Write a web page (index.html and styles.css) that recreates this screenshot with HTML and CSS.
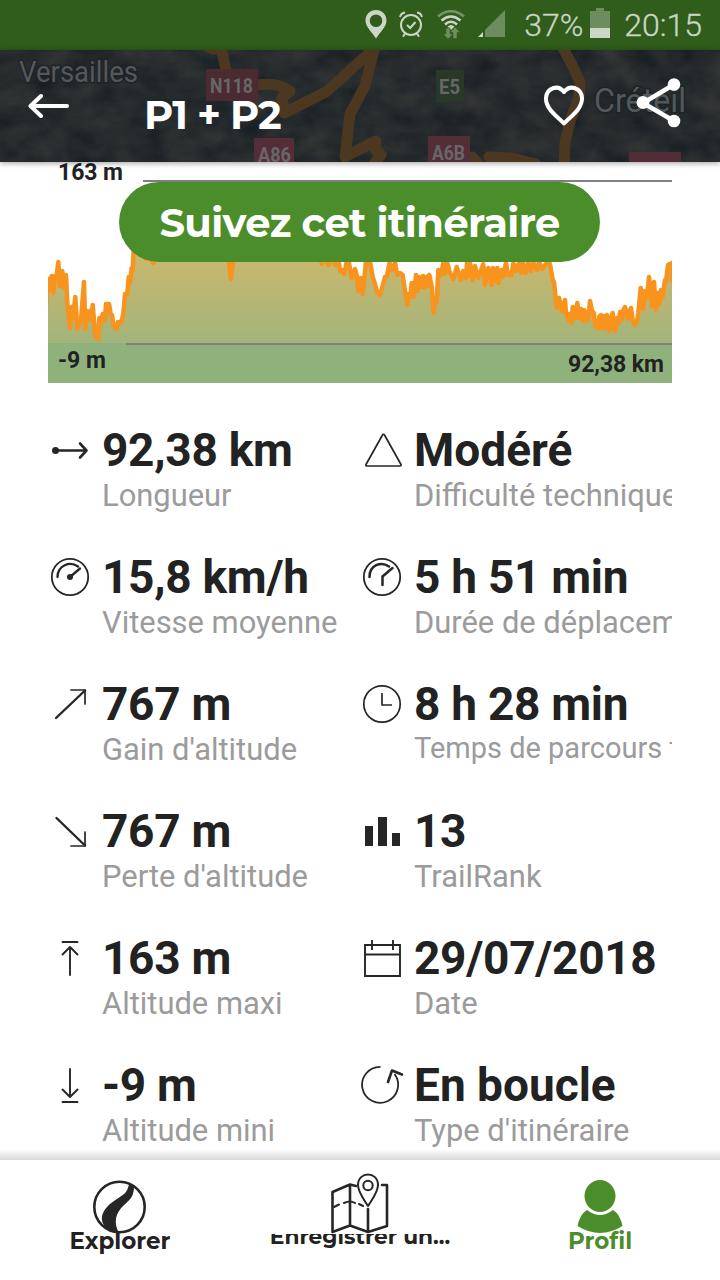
FILE: index.html
```html
<!DOCTYPE html>
<html lang="fr">
<head>
<meta charset="utf-8">
<title>P1 + P2</title>
<link rel="stylesheet" href="styles.css">
</head>
<body>
<div class="app">
  <div class="status">
    <svg class="s-pin" width="22" height="29" viewBox="0 0 22 29"><path fill-rule="evenodd" d="M11 0C5 0 .5 4.600 .5 10.500C.5 17 7 22 11 28.500C15 22 21.500 17 21.500 10.500C21.500 4.600 17 0 11 0ZM11 4.500a6.300 6.300 0 1 1 0 12.600a6.300 6.300 0 0 1 0-12.600Z"/></svg>
    <svg class="s-alarm" width="24" height="27" viewBox="0 0 24 27" fill="none" stroke="currentColor" stroke-width="2"><circle cx="12" cy="14" r="10"/><path d="M8 14l3.200 3 5.300-6M1 6Q2 2 6 1.500M23 6Q22 2 18 1.500M6 22.500l-2 3.200M18 22.500l2 3.200"/></svg>
    <svg class="s-wifi" width="28" height="29" viewBox="0 0 28 29"><g fill="none" stroke="currentColor" stroke-width="2.600"><path opacity=".45" d="M1 6.500Q14-4 27 6.500"/><path d="M4.500 10.500Q14 2.500 23.500 10.500M8 14.500Q14 9 20 14.500"/></g><path d="M10.500 16.500Q14 13.500 17.500 16.500L14 20Z"/><path fill="#6f8f60" stroke="#305d1b" stroke-width=".6" d="M9 18h4v6h3l-5 5-5-5h3zM16 28.500v-6h-3l5-5.500 5 5.500h-3v6z"/></svg>
    <svg class="s-signal" width="27" height="27" viewBox="0 0 27 27"><path opacity=".4" d="M27 0V27H7V20Z"/><path d="M5 22v5H0z"/></svg>
    <span class="s-text">37%</span>
    <svg class="s-battery" width="20" height="30" viewBox="0 0 20 30"><path opacity=".4" d="M6 0h8v3h6v17H0V3h6z"/><path d="M0 20h20v10H0z"/></svg>
    <span class="s-text">20:15</span>
  </div>

  <header class="header">
    <svg class="map" width="720" height="112" viewBox="0 50 720 112">
      <defs>
        <filter id="terrain" x="0" y="0" width="100%" height="100%" color-interpolation-filters="sRGB"><feTurbulence type="fractalNoise" baseFrequency=".03 .045" numOctaves="5" seed="8"/><feColorMatrix values=".14 .06 0 0 .048  .11 .04 0 0 .092  .08 .04 0 0 .115  0 0 0 0 1"/></filter>
      </defs>
      <rect y="50" width="720" height="112" filter="url(#terrain)"/>
      <g fill="none" stroke="#4c3720" stroke-width="11" stroke-linejoin="round" stroke-linecap="round">
        <path d="M207 46l6 3 8-1 7 30M258 85q20-3 32 6l-8 7 2 15 42-21 50-45M375 46l-10 40-15 28-5 43M346 156l30-15-1 8 6 6-7 9"/>
        <path d="M563 48l9 17 8 17-1 16-8 20-6 24-1 24M489 157l23 1 24 6M472 157l8 9"/>
      </g>
      <rect x="206" y="69" width="52" height="32" fill="#4c2a31"/>
      <rect x="254" y="138" width="40" height="26" fill="#542d38"/>
      <rect x="436" y="70" width="28" height="32" fill="#283829"/>
      <rect x="428" y="136" width="42" height="28" fill="#532e36"/>
      <rect x="629" y="152" width="52" height="12" fill="#512e37"/>
      <g class="road">
        <text x="210" y="93" textLength="43" lengthAdjust="spacingAndGlyphs">N118</text>
        <text x="258" y="162" textLength="33" lengthAdjust="spacingAndGlyphs">A86</text>
        <text x="439" y="94" textLength="21" lengthAdjust="spacingAndGlyphs">E5</text>
        <text x="432" y="160" textLength="33" lengthAdjust="spacingAndGlyphs">A6B</text>
      </g>
      <g class="place">
        <text x="19" y="82" font-size="30" textLength="119" lengthAdjust="spacingAndGlyphs">Versailles</text>
        <text x="594" y="112" font-size="34" textLength="92" lengthAdjust="spacingAndGlyphs">Créteil</text>
      </g>
    </svg>
    <svg class="back" width="42" height="26" viewBox="0 0 42 26" fill="none" stroke="#fff" stroke-width="4" stroke-linecap="round" stroke-linejoin="round"><path d="M39 13H3M13 3L2.500 13 13 23"/></svg>
    <h1 class="title">P1 + P2</h1>
    <svg class="heart" width="42" height="42" viewBox="0 0 42 42" fill="none" stroke="#fff" stroke-width="4" stroke-linejoin="round"><path d="M21 38.500C15 32 2.500 24 3 13C3.500 3 15-1 21 7C27-1 38.500 3 39 13C39.500 24 27 32 21 38.500Z"/></svg>
    <svg class="share" width="46" height="50" viewBox="0 0 46 50"><path d="M38 6.500L7 25l31 18" fill="none" stroke="#fff" stroke-width="4.500"/><g fill="#fff"><circle cx="38" cy="6.500" r="6.300"/><circle cx="7" cy="24.500" r="6.500"/><circle cx="38" cy="43" r="6.300"/></g></svg>
  </header>

  <main class="content">
    <section class="profile">
      <svg width="624" height="221" viewBox="48 162 624 221">
        <defs><linearGradient id="ground" gradientUnits="userSpaceOnUse" x1="0" y1="250" x2="0" y2="344"><stop offset="0" stop-color="#ccb86d"/><stop offset="1" stop-color="#a2b47b"/></linearGradient></defs>
        <path fill="url(#ground)" stroke="#f8941d" stroke-width="4.500" stroke-linejoin="round" d="M43 350L47 293L49 279 50 290 51.700 276 53.300 293 55 276 56.500 277 58.300 262 60 286 62.300 271 64 288 66 275 67.300 303 70 328 71.700 307 73 318 75.300 297 77.300 329 81 320 84 282 85.300 329 86.500 311 88.300 319 90 311 91 320 92.700 305 95.300 336 98.300 339 99.300 318 101 324 102.700 314 105 320 106 304 107.500 311 109 304 110.700 314 112 315 113.500 325 116.700 329 118 322 121 323 123.300 314 125 294 127.300 294 128.700 277 130 283 131.700 268 132.700 270 133.700 250 140 240 146 259 149 255 153.300 263 158 240 228 240 229 262 231 279 233 262 234 240 318 240 321.700 264 325 256 328.500 265 331 255 335 265 338 256 340 271 342 270 344.300 274 347 260 349 263 351.700 278 353.500 276 355 269 357 276 358.300 291 361 278 362.700 294 366 262 370 262 372.700 277 375 284 377.300 293 380 295 382 288 385 277 387 276 389.500 263 391.700 270 395 263 397.300 275 400 273 402.700 275 405 291 407.300 305 409 294 410.500 296 411.700 283 413.500 297 415 285 416 275 417.500 291 419.300 277 421.700 287 423 276 424 288 425.500 277 427 286 428.500 276 429.300 275 431.700 287 433.700 313 435 302 436.700 302 438.300 270 441 275 443.300 263 445 274 447.300 263 450 273 453.300 279 456.700 267 460.700 280 463 271 466 278 467 263 469.500 276 470 263 472.700 280 475 266 478.300 278 483.300 264 485 285 488.300 268 491.700 285 493 268 496 281 497.300 268 498.500 283 501.700 270 503 277 506 263 508 275 511.700 275 513.300 263 516 271 519 263 521 273 523 263 525.700 273 528 263 531 271 533 262 537 270 539 262 542 269 546.700 263 550 264 552.700 280 554 282 556.700 308 559 298 562.300 311 565 300 566 313 568.300 320 569.500 314 571.700 323 572.700 307 575 318 577.300 303 579 318 581 309 583 321 584 310 585.500 321 587 312 588.300 320 590 301 592 311 594 313 595 326 596.500 321 598 329 599.500 316 601 315 602.500 328 604 316 605.500 328 607 315 609.300 331 611 318 612.700 313 614 328 615.300 331 617 318 619 323 620 312 622 319 623 311 625 307 627.700 319 630 310 631 308 633 322 635 325 637 321 638.300 313 640.700 288 642 300 643.300 309 645 291 647 297 649 277 650 286 652 306 653 292 654 282 656 310 658 293 659.500 304 661 290 662.500 297 665 280 666 282 668 265 672 263V280H676V350"/>
        <rect x="48" y="343" width="624" height="40" fill="#8fb27d"/>
        <path stroke="#808080" stroke-width="2" d="M143 181H672M126 344H672"/>
        <g class="axis">
          <text x="58" y="180" textLength="65">163 m</text>
          <text x="58" y="368" textLength="48">-9 m</text>
          <text x="568" y="372" textLength="96">92,38 km</text>
        </g>
      </svg>
      <button class="follow">Suivez cet itinéraire</button>
    </section>

    <section class="stats">
      <div class="stat">
        <svg class="icon" width="44" height="44" viewBox="0 0 44 44"><circle class="solid" cx="7.500" cy="22.500" r="3.500"/><path d="M8 22.500H38M32 15.500l6.500 7-6.500 7" stroke-width="2.600"/></svg>
        <div><div class="value">92,38 km</div><div class="label">Longueur</div></div>
      </div>
      <div class="stat">
        <svg class="icon" width="44" height="44" viewBox="0 0 44 44"><path d="M22.500 7Q23.500 5.500 24.500 7L41 36.500Q41.500 38 40 38H7Q5 38 6 36.500Z" stroke-width="1.700"/></svg>
        <div><div class="value wide">Modéré</div><div class="label">Difficulté technique</div></div>
      </div>
      <div class="stat">
        <svg class="icon" width="44" height="44" viewBox="0 0 44 44"><circle cx="22" cy="22" r="18.200" stroke-width="1.800"/><path d="M9.500 22C9.500 10 22 6 30 11.500M22 22L32 13.500" stroke-width="2.300"/><circle class="solid" cx="22" cy="22" r="3"/></svg>
        <div><div class="value">15,8 km/h</div><div class="label">Vitesse moyenne</div></div>
      </div>
      <div class="stat">
        <svg class="icon" width="44" height="44" viewBox="0 0 44 44"><circle cx="22" cy="22" r="18.200" stroke-width="1.800"/><path d="M9.500 22C9.500 10 21 6 29 11.500M32.500 13L22.500 21.500V30" stroke-width="2.500"/></svg>
        <div><div class="value">5 h 51 min</div><div class="label">Durée de déplacement</div></div>
      </div>
      <div class="stat">
        <svg class="icon" width="44" height="44" viewBox="0 0 44 44"><path d="M8 36L37 8.500" stroke-width="2.400"/><path d="M23 8H37V22" stroke-width="1.700"/></svg>
        <div><div class="value">767 m</div><div class="label">Gain d'altitude</div></div>
      </div>
      <div class="stat">
        <svg class="icon" width="44" height="44" viewBox="0 0 44 44"><circle cx="22" cy="22" r="18.200" stroke-width="1.700"/><path d="M22 11V23H32" stroke-width="1.700" stroke-linecap="butt"/></svg>
        <div><div class="value">8 h 28 min</div><div class="label small">Temps de parcours total</div></div>
      </div>
      <div class="stat">
        <svg class="icon" width="44" height="44" viewBox="0 0 44 44"><path d="M8.500 9L37 36.500" stroke-width="2.400"/><path d="M23 37H37V23" stroke-width="1.700"/></svg>
        <div><div class="value">767 m</div><div class="label">Perte d'altitude</div></div>
      </div>
      <div class="stat">
        <svg class="icon" width="44" height="44" viewBox="0 0 44 44"><path class="solid" d="M5 17h8v20H5zM18 8h9v29h-9zM32 24h8v13h-8z"/></svg>
        <div><div class="value">13</div><div class="label">TrailRank</div></div>
      </div>
      <div class="stat">
        <svg class="icon" width="44" height="44" viewBox="0 0 44 44"><path d="M14.500 6H29.500M22 39V11M14.500 18.500L22 11l7.500 7.500" stroke-width="1.900"/></svg>
        <div><div class="value">163 m</div><div class="label">Altitude maxi</div></div>
      </div>
      <div class="stat">
        <svg class="icon" width="44" height="44" viewBox="0 0 44 44"><path d="M5 9H40V40H5ZM5 18.500H40M12 4v10M33 4v10" stroke-width="1.900" stroke-linecap="butt" stroke-linejoin="miter"/></svg>
        <div><div class="value">29/07/2018</div><div class="label">Date</div></div>
      </div>
      <div class="stat">
        <svg class="icon" width="44" height="44" viewBox="0 0 44 44"><path d="M14.500 39H29.500M22 6V34M14.500 26.500L22 34l7.500-7.500" stroke-width="1.900"/></svg>
        <div><div class="value">-9 m</div><div class="label">Altitude mini</div></div>
      </div>
      <div class="stat">
        <svg class="icon" width="44" height="44" viewBox="0 0 44 44"><path d="M20.500 3.800A18 18 0 1 0 34.500 11" stroke-width="1.800" stroke-linecap="butt"/><path d="M28 19L32 7.500 42 11.500" stroke-width="2.600"/></svg>
        <div><div class="value wide">En boucle</div><div class="label">Type d'itinéraire</div></div>
      </div>
    </section>
  </main>

  <nav class="tabs">
    <a class="tab">
      <svg width="54" height="54" viewBox="0 0 54 54"><circle cx="26.500" cy="27" r="25.200" fill="none" stroke="#262626" stroke-width="2.600"/><path fill="#262626" d="M36 3C35 14 29 15 21 21C5 32 7 43 15 50L26 53C20 42 23 33 30 26C38 19 41 16 41 6Z"/></svg>
      <span class="tab-name">Explorer</span>
    </a>
    <a class="tab record">
      <svg width="60" height="62" viewBox="0 0 60 62" fill="none" stroke="#262626" stroke-width="2.600" stroke-linejoin="round" stroke-linecap="round"><path d="M26 13L20 11.500 2.500 19V59L20 52.500 38 59 57 53V12L52 12M20 11.500V52.500M38 36V59"/><path d="M4 34L9 31.500M14 30Q20 27 25 30M29 31l4 2" stroke-width="2"/><path d="M38 33C33 25 28 19 28 12C28-2 48-2 48 12C48 19 43 25 38 33Z" stroke-width="2"/><circle cx="38" cy="12.500" r="4.700" stroke-width="2"/></svg>
      <span class="tab-name">Enregistrer un...</span>
    </a>
    <a class="tab active">
      <svg width="46" height="54" viewBox="0 0 46 54" fill="#4c8d2b"><ellipse cx="23" cy="16" rx="15.500" ry="16"/><path d="M10 30Q23 40 36 30Q43 34 45.500 46Q23 60 .5 46Q3 34 10 30Z"/></svg>
      <span class="tab-name">Profil</span>
    </a>
  </nav>
</div>
</body>
</html>
```
FILE: styles.css
```css
* { box-sizing: border-box; }
body { margin: 0; background: #fff; font-family: Roboto, "Noto Sans", sans-serif; color: #222; }
.app { width: 720px; height: 1280px; display: flex; flex-direction: column; overflow: hidden; }
svg { display: block; flex: none; }

.status { height: 50px; flex: none; background: #305d1b; color: #cbd6c6; display: flex; align-items: center; justify-content: flex-end; padding-right: 18px; }
.status svg { fill: currentColor; }
.status .s-pin { margin-top: -2px; }
.status .s-alarm { fill: none; margin: -2px 14px 0 12px; }
.s-wifi { margin: -1px 13px 0 0; }
.s-signal { margin: -3px 19px 0 0; }
.s-battery { margin: -4px 14px 0 7px; }
.s-text { font-size: 32px; font-weight: 300; line-height: 50px; -webkit-text-stroke: .3px currentColor; }

.header { position: relative; z-index: 2; height: 112px; flex: none; display: flex; align-items: center; padding: 0 38px 0 28px; box-shadow: 0 1px 6px rgba(0,0,0,.4); }
.map { position: absolute; inset: 0; }
.road { font-size: 20px; font-weight: 700; fill: #686669; }
.place { fill: #53585b; stroke: #1e2325; stroke-width: 3px; paint-order: stroke; }
.back, .title, .heart, .share { position: relative; }
.title { margin: 18px auto 0 74px; font: 700 40px/50px Montserrat, Inter, sans-serif; letter-spacing: -1.1px; color: #fff; white-space: nowrap; }
.heart { margin-right: 51px; }
.share { margin-top: -6px; }

.content { position: relative; flex: 1; min-height: 0; overflow: hidden; padding: 0 48px; }
.content::after { content: ""; position: absolute; left: 0; right: 0; bottom: 0; height: 11px; background: linear-gradient(rgba(0,0,0,0), rgba(0,0,0,.15)); }
.profile { position: relative; height: 221px; }
.axis { font-size: 23px; font-weight: 700; fill: #222; }
.follow { position: absolute; left: 71px; top: 20px; width: 481px; height: 80px; border: 0; border-radius: 40px; padding: 1px 0 0; background: #4c8d2b; color: #fff; font: 700 40px/79px Montserrat, Inter, sans-serif; letter-spacing: -.6px; white-space: nowrap; }

.stats { display: grid; grid-template-columns: 312px 312px; grid-auto-rows: 127px; padding-top: 41px; }
.stat { display: flex; gap: 10px; overflow: hidden; white-space: nowrap; }
.icon { margin-top: 4px; fill: none; stroke: #262626; stroke-linecap: round; stroke-linejoin: round; }
.solid { fill: #262626; stroke: none; }
.value { font-size: 46px; line-height: 52px; padding-bottom: 2px; font-weight: 700; letter-spacing: -.28px; }
.value.wide { letter-spacing: 0; }
.label { font-size: 30.900px; line-height: 36px; color: #9b9b9b; }
.label.small { font-size: 29px; line-height: 33px; }

.tabs { height: 120px; flex: none; display: grid; grid-template-columns: repeat(3, 1fr); background: #fff; }
.tab { display: flex; flex-direction: column; align-items: center; padding-top: 20px; }
.tab-name { font: 700 23px/28px Montserrat, Inter, sans-serif; margin-top: -7px; color: #222; white-space: nowrap; }
.record { padding-top: 13px; }
.record .tab-name { font-size: 21.700px; margin-top: -13px; clip-path: inset(12px 0 0 0); }
.active .tab-name { color: #4c8d2b; }
```
